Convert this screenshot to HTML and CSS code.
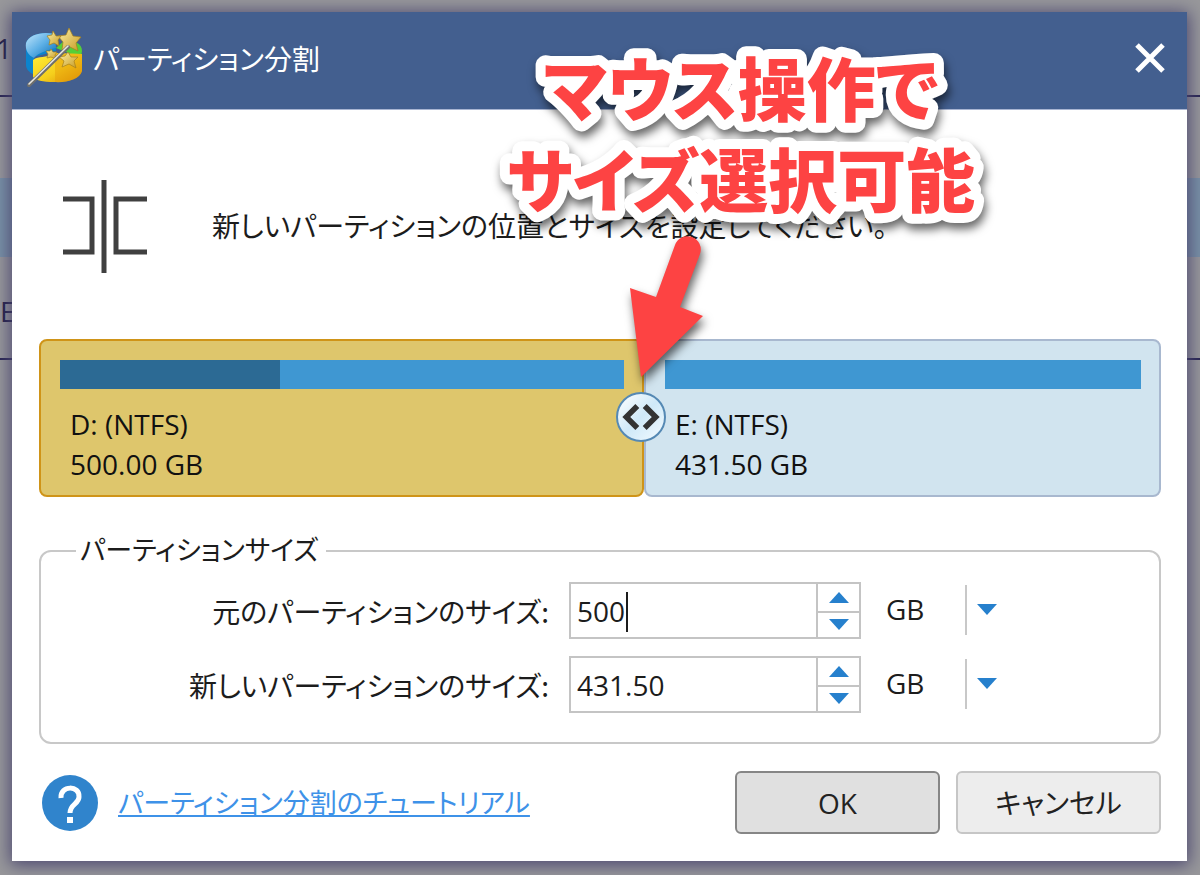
FILE: index.html
```html
<!DOCTYPE html>
<html lang="ja">
<head>
<meta charset="utf-8">
<title>パーティション分割</title>
<link rel="stylesheet" href="styles.css">
</head>
<body>
<div class="screen">
  <div class="backdrop" aria-hidden="true">
    <div class="backdrop-row head">1</div>
    <div class="backdrop-row"></div>
    <div class="backdrop-row selected"></div>
    <div class="backdrop-row volume">E</div>
  </div>

  <main class="dialog">
    <header class="titlebar">
      <svg class="app-icon" viewBox="0 0 60 60" aria-hidden="true">
        <defs>
          <linearGradient id="blue" x1="0" y1="0" x2="1" y2="1"><stop offset="0" stop-color="#c3e6fb"/><stop offset=".5" stop-color="#5db0e6"/><stop offset="1" stop-color="#0a6cb4"/></linearGradient>
          <linearGradient id="gold" x1="0" y1="0" x2="1" y2="1"><stop offset="0" stop-color="#ffee3a"/><stop offset=".55" stop-color="#f5cf1c"/><stop offset="1" stop-color="#d98a04"/></linearGradient>
          <linearGradient id="star" x1="0" y1="0" x2="1" y2="1"><stop offset="0" stop-color="#fbf0a8"/><stop offset="1" stop-color="#c79a22"/></linearGradient>
        </defs>
        <path d="M1 15C4 6 18 3 30 6L31 23 9 29V47C4 44 1 41 1 37Z" fill="#0c84cd"/>
        <path d="M1 15C4 6 18 3 30 6L31 20C22 22 13 25 9 30 3 27 0 22 1 15Z" fill="url(#blue)"/>
        <path d="M31 20 40 12C50 12 57 16 57 23L56 30Z" fill="#55cf38"/>
        <path d="M8 32C14 27 20 31 30 25L57 26V43C55 51 42 55 29 54 18 54 10 52 8 49Z" fill="url(#gold)"/>
        <path d="M30 25 57 26V43C55 51 44 54 30 54Z" fill="#e69c08" opacity=".45"/>
        <g fill="url(#star)" stroke="#a5801d" stroke-width=".7">
          <path d="M44 0 48 8 56 9 51 15 53 23 45 19 37 22 38 14 33 8 41 7Z"/>
          <path d="M28 3 31 8 36 8 33 12 34 18 29 15 24 17 25 12 22 8 27 7Z"/>
          <path d="M43 24 46 29 53 29 49 33 51 40 44 36 37 39 39 33 34 29 40 28Z"/>
          <path d="M26 21 28 24 32 24 30 27 31 31 26 29 22 30 23 26 21 23 25 23Z"/>
        </g>
        <path d="M4 57 43 19" stroke="#6f6f6b" stroke-width="4" stroke-linecap="round"/>
        <path d="M4 56 43 18" stroke="#e6e6e2" stroke-width="1.6" stroke-linecap="round"/>
      </svg>
      <h1 class="title">パーティション分割</h1>
      <button class="close" type="button" aria-label="閉じる">
        <svg viewBox="0 0 30 30" aria-hidden="true"><path d="M2 2 28 28M28 2 2 28"/></svg>
      </button>
    </header>

    <form class="content">
      <div class="intro">
        <svg class="split-icon" viewBox="0 0 84 93" aria-hidden="true"><path d="M0 19H29V72H0M84 19H53V72H84M41 0V93"/></svg>
        <p class="intro-text">新しいパーティションの位置とサイズを設定してください。</p>
      </div>

      <section class="map">
        <div class="part original">
          <div class="usage"><div class="used" style="width:39%"></div></div>
          <div class="part-text">D: (NTFS)<br>500.00 GB</div>
          <button class="handle" type="button" aria-label="サイズ変更">
            <svg viewBox="0 0 50 50" aria-hidden="true"><path d="M21 13 9 25 21 37M29 13 41 25 29 37"/></svg>
          </button>
        </div>
        <div class="part new">
          <div class="usage"></div>
          <div class="part-text">E: (NTFS)<br>431.50 GB</div>
        </div>
      </section>

      <fieldset class="sizes">
        <legend>パーティションサイズ</legend>
        <div class="row">
          <label for="old-size">元のパーティションのサイズ:</label>
          <div class="spinner">
            <input id="old-size" type="text" inputmode="decimal" value="500">
            <span class="caret"></span>
            <div class="steps">
              <button type="button" aria-label="増やす"><svg viewBox="0 0 20 11"><path d="M0 11 10 0 20 11Z"/></svg></button>
              <button type="button" aria-label="減らす"><svg viewBox="0 0 20 11"><path d="M0 0H20L10 11Z"/></svg></button>
            </div>
          </div>
          <div class="unit">
            <select aria-label="元のサイズの単位"><option>GB</option></select>
            <svg viewBox="0 0 20 11" aria-hidden="true"><path d="M0 0H20L10 11Z"/></svg>
          </div>
        </div>
        <div class="row">
          <label for="new-size">新しいパーティションのサイズ:</label>
          <div class="spinner">
            <input id="new-size" type="text" inputmode="decimal" value="431.50">
            <div class="steps">
              <button type="button" aria-label="増やす"><svg viewBox="0 0 20 11"><path d="M0 11 10 0 20 11Z"/></svg></button>
              <button type="button" aria-label="減らす"><svg viewBox="0 0 20 11"><path d="M0 0H20L10 11Z"/></svg></button>
            </div>
          </div>
          <div class="unit">
            <select aria-label="新しいサイズの単位"><option>GB</option></select>
            <svg viewBox="0 0 20 11" aria-hidden="true"><path d="M0 0H20L10 11Z"/></svg>
          </div>
        </div>
      </fieldset>

      <footer class="footer">
        <svg class="help" viewBox="0 0 56 56" aria-hidden="true">
          <circle cx="28" cy="28" r="28" fill="#3084cc"/>
          <path d="M19 23C18 10 38 10 37 22C37 29 28 29 28 38" fill="none" stroke="#fff" stroke-width="5"/>
          <path d="M25 42H31V48H25Z" fill="#fff"/>
        </svg>
        <a class="tutorial" href="#">パーティション分割のチュートリアル</a>
        <button class="btn primary" type="button">OK</button>
        <button class="btn" type="button">キャンセル</button>
      </footer>
    </form>
  </main>

  <svg class="callout" viewBox="0 0 522 350">
    <g class="callout-text">
      <text x="261" y="73">マウス操作で</text>
      <text x="261" y="164">サイズ選択可能</text>
    </g>
    <path class="arrow" d="M161 334 150 245 176 254 195 202A13 13 0 0 1 220 211L200 264 223 273Z"/>
  </svg>
</div>
</body>
</html>
```
FILE: styles.css
```css
* { box-sizing: border-box; }

body {
  margin: 0;
  font-family: "Open Sans", "Noto Sans CJK JP", sans-serif;
  font-size: 28px;
  line-height: 40px;
  color: #1c1c1c;
  background: #98989b;
}

.screen {
  position: relative;
  display: grid;
  min-height: 100vh;
}

.backdrop,
.dialog { grid-area: 1 / 1; }

.backdrop {
  display: grid;
  grid-template-rows: 97px 81px 79px 103px;
  overflow: hidden;
  color: #1e1b45;
}
.backdrop-row.head {
  padding-top: 28px;
  border-bottom: 2px solid #282452;
  text-indent: -4px;
}
.backdrop-row.selected { background: #7890a6; }
.backdrop-row.volume {
  padding-top: 34px;
  border-bottom: 2px solid #282452;
}

.dialog {
  position: relative;
  margin: 12px 13px 14px 12px;
  background: #fff;
  box-shadow: 0 2px 16px 2px #4c4870;
  display: flex;
  flex-direction: column;
}

.titlebar {
  display: flex;
  align-items: center;
  gap: 8px;
  height: 98px;
  padding: 0 22px 6px 13px;
  background: #435f8f;
  border-bottom: 1px solid #a9b5d2;
}
.app-icon { width: 60px; height: 60px; }
.title,
.intro-text,
.sizes legend,
.row label,
.tutorial {
  font-family: "Noto Sans CJK JP", sans-serif;
  font-feature-settings: "palt";
}
.title {
  flex: 1;
  margin: 0;
  font-size: 28px;
  font-weight: 400;
  color: #fff;
}
.close {
  padding: 0;
  border: 0;
  background: none;
  display: flex;
}
.close svg {
  width: 30px;
  height: 30px;
  fill: none;
  stroke: #fff;
  stroke-width: 5;
}

.content { padding: 70px 26px 27px 27px; }

.intro {
  display: flex;
  align-items: center;
  gap: 65px;
  margin: 0 0 66px 24px;
}
.split-icon {
  width: 84px;
  height: 93px;
  fill: none;
  stroke: #404040;
  stroke-width: 5;
}
.intro-text {
  margin: 0;
  padding-bottom: 4px;
}

.map {
  display: grid;
  grid-template-columns: 605fr 517fr;
  margin-bottom: 39px;
}
.part {
  position: relative;
  height: 158px;
  padding: 19px 18px 0 19px;
  border: 2px solid;
  border-radius: 8px;
  color: #111;
}
.original {
  background: #dec66c;
  border-color: #cf9418;
}
.new {
  background: #d1e4ef;
  border-color: #a8b8cf;
}
.usage { height: 29px; background: #3f97d2; }
.used { height: 100%; background: #2c6a94; }
.part-text { padding: 15px 0 0 10px; }
.handle {
  position: absolute;
  z-index: 1;
  right: -24px;
  top: 51px;
  width: 50px;
  height: 50px;
  padding: 0;
  border: 2px solid #5589b4;
  border-radius: 50%;
  background: linear-gradient(135deg, #fff, #cfe9f8 50%, #f4fbff);
}
.handle svg {
  display: block;
  width: 46px;
  height: 46px;
  fill: none;
  stroke: #333;
  stroke-width: 6;
}

.sizes {
  margin: 0 0 27px;
  padding: 16px 0 29px;
  border: 2px solid #c8c8c8;
  border-radius: 12px;
}
.sizes legend {
  margin-left: 35px;
  padding: 0 8px 4px 4px;
  font-size: 27px;
  line-height: 26px;
}
.row {
  display: grid;
  grid-template-columns: 508fr 292px 278fr;
  column-gap: 20px;
  align-items: center;
}
.row + .row { margin-top: 17px; }
.row label { text-align: right; }
.spinner {
  position: relative;
  display: flex;
  height: 57px;
  border: 2px solid #c4c4c4;
}
.spinner input {
  flex: 1;
  min-width: 0;
  padding: 0 0 0 6px;
  border: 0;
  outline: 0;
  background: #fff;
  font: inherit;
  color: #1c1c1c;
}
.caret {
  position: absolute;
  left: 55px;
  top: 8px;
  width: 2px;
  height: 40px;
  background: #1c1c1c;
}
.steps {
  width: 43px;
  display: grid;
  grid-template-rows: 1fr 1fr;
  border-left: 2px solid #c4c4c4;
}
.steps button {
  display: grid;
  place-items: center;
  padding: 0;
  border: 0;
  background: #fff;
}
.steps button + button { border-top: 2px solid #c4c4c4; }
.steps svg,
.unit svg { width: 20px; height: 11px; fill: #2680cd; }
.unit {
  display: flex;
  align-items: center;
  padding-bottom: 2px;
}
.unit select {
  appearance: none;
  width: 86px;
  height: 50px;
  margin-right: 10px;
  padding: 0 0 2px 5px;
  border: 0;
  border-right: 2px solid #c8c8c8;
  background: none;
  font: inherit;
  color: #1c1c1c;
}

.footer {
  display: flex;
  align-items: center;
  gap: 16px;
}
.help { width: 56px; height: 56px; margin-left: 3px; }
.tutorial {
  margin: 0 auto 0 4px;
  padding-bottom: 2px;
  font-size: 27px;
  color: #3e92e8;
}
.btn {
  width: 205px;
  height: 63px;
  padding: 0;
  border: 2px solid #c6c6c6;
  border-radius: 6px;
  background: #ededed;
  font: inherit;
  font-feature-settings: "palt";
  color: #222;
}
.btn.primary { background: #e0e0e0; border-color: #868686; }

/* Annotation floating above the dialog */
.callout {
  position: absolute;
  left: 480px;
  top: 43px;
  width: 522px;
  height: 350px;
  filter: drop-shadow(2px 6px 5px rgba(0, 0, 0, .6));
  pointer-events: none;
}
.callout-text {
  font: 900 69px "Noto Sans CJK JP", sans-serif;
  font-feature-settings: "palt";
  text-anchor: middle;
  fill: #fd4343;
  stroke: #fff;
  stroke-width: 20px;
  stroke-linejoin: round;
  paint-order: stroke;
}
.arrow { fill: #fd4343; }
```
